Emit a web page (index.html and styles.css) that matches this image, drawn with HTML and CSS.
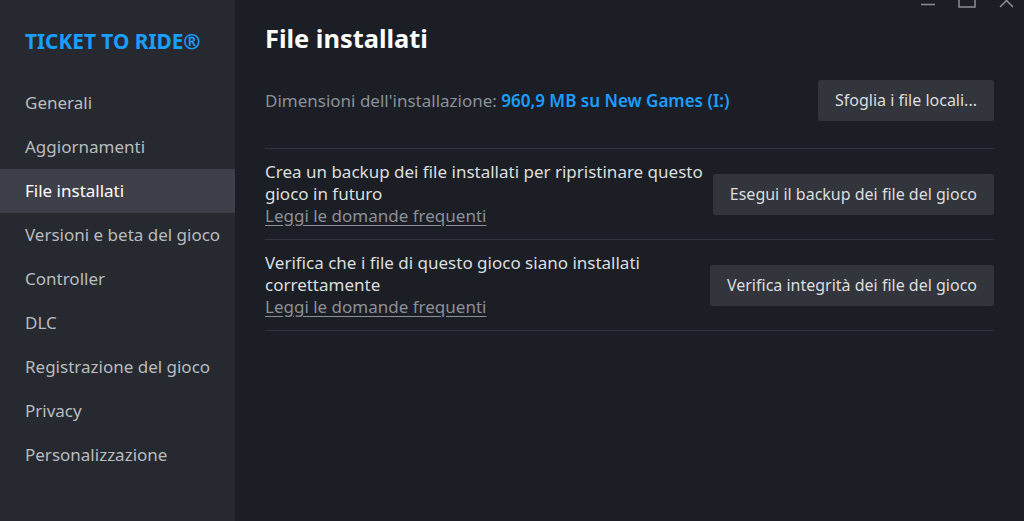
FILE: index.html
```html
<!DOCTYPE html>
<html lang="it">
<head>
<meta charset="utf-8">
<link rel="stylesheet" href="styles.css">
</head>
<body>
<div class="app">
  <aside class="sidebar">
    <div class="game-title">TICKET TO RIDE®</div>
    <nav class="nav">
      <div class="nav-item">Generali</div>
      <div class="nav-item">Aggiornamenti</div>
      <div class="nav-item active">File installati</div>
      <div class="nav-item">Versioni e beta del gioco</div>
      <div class="nav-item">Controller</div>
      <div class="nav-item">DLC</div>
      <div class="nav-item">Registrazione del gioco</div>
      <div class="nav-item">Privacy</div>
      <div class="nav-item">Personalizzazione</div>
    </nav>
  </aside>
  <main class="main">
    <div class="win-controls">
      <svg class="wc wc-min" width="16" height="12" viewBox="0 0 16 12"><line x1="1" y1="4.5" x2="15" y2="4.5" stroke="#8a8e95" stroke-width="1.5"/></svg>
      <svg class="wc wc-max" width="18" height="12" viewBox="0 0 18 12"><rect x="1" y="-8" width="16" height="15" fill="none" stroke="#8a8e95" stroke-width="1.5"/></svg>
      <svg class="wc wc-close" width="16" height="12" viewBox="0 0 16 12"><path d="M1 -6 L14 7 M14 -6 L1 7" stroke="#8a8e95" stroke-width="1.5" fill="none"/></svg>
    </div>
    <h1 class="page-title">File installati</h1>
    <div class="row row-size">
      <div class="size-text">Dimensioni dell'installazione: <span class="size-value">960,9 MB su New Games (I:)</span></div>
      <button class="btn">Sfoglia i file locali...</button>
    </div>
    <div class="row row-item">
      <div class="item-text">
        <div class="desc">Crea un backup dei file installati per ripristinare questo gioco in futuro</div>
        <a class="faq">Leggi le domande frequenti</a>
      </div>
      <button class="btn">Esegui il backup dei file del gioco</button>
    </div>
    <div class="row row-item">
      <div class="item-text">
        <div class="desc">Verifica che i file di questo gioco siano installati correttamente</div>
        <a class="faq">Leggi le domande frequenti</a>
      </div>
      <button class="btn">Verifica integrità dei file del gioco</button>
    </div>
  </main>
</div>
</body>
</html>
```

FILE: styles.css
```css
* { box-sizing: border-box; }
html, body {
  margin: 0;
  padding: 0;
  height: 100%;
}
body {
  font-family: "Noto Sans", "Open Sans", sans-serif;
  background: #1b1e25;
  color: #dcdedf;
  overflow: hidden;
}
.app {
  display: flex;
  height: 521px;
}
.sidebar {
  width: 236px;
  flex: none;
  background: #26292f;
  border-right: 1px solid #1d1f24;
  display: flex;
  flex-direction: column;
}
.game-title {
  color: #1a9fff;
  font-weight: 700;
  font-size: 20.8px;
  padding: 27px 0 0 25px;
  line-height: 28px;
}
.nav {
  margin-top: 26px;
  display: flex;
  flex-direction: column;
}
.nav-item {
  height: 44px;
  line-height: 44px;
  padding-left: 25px;
  font-size: 17px;
  color: #b8bcbf;
}
.nav-item.active {
  background: #3d4049;
  color: #ffffff;
}
.main {
  flex: 1;
  position: relative;
  padding: 0 30px 0 29px;
}
.wc { display: block; position: absolute; top: 0; }
.wc-min { right: 88px; }
.wc-max { right: 48px; }
.wc-close { right: 9px; }
.page-title {
  margin: 0;
  padding-top: 21px;
  font-size: 25.4px;
  line-height: 35px;
  font-weight: 700;
  color: #ffffff;
}
.row {
  display: flex;
  align-items: center;
  justify-content: space-between;
  border-bottom: 1px solid #30343c;
}
.row-size {
  height: 93px;
  padding-bottom: 4px;
}
.size-text {
  font-size: 17px;
  color: #8b9098;
}
.size-value {
  color: #1a9fff;
  font-weight: 600;
}
.row-item {
  height: 91px;
}
.item-text {
  width: 445px;
  font-size: 17px;
  line-height: 22px;
  color: #dcdedf;
}
.faq {
  display: inline-block;
  color: #8b9098;
  text-decoration: underline;
  text-underline-offset: 3px;
}
.btn {
  font-family: inherit;
  font-size: 16px;
  color: #dcdedf;
  background: #32353c;
  border: none;
  border-radius: 3px;
  height: 41px;
  padding: 0 17px;
}
```
